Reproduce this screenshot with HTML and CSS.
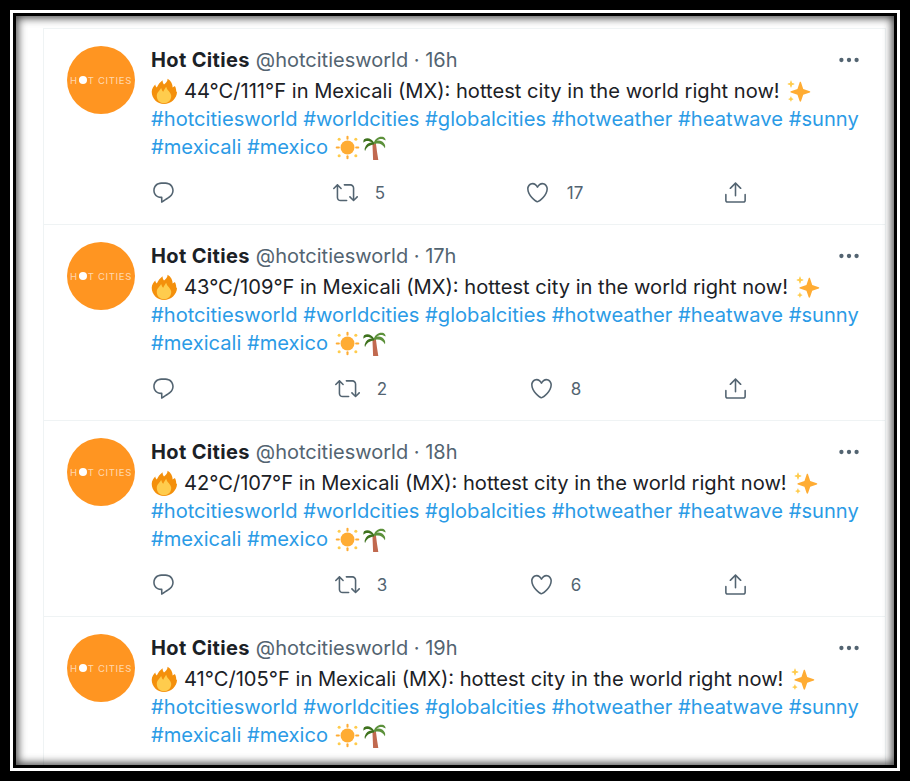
FILE: index.html
```html
<!DOCTYPE html>
<html lang="en">
<head>
  <meta charset="UTF-8">
  <title>Hot Cities</title>
  <link rel="stylesheet" href="styles.css">
</head>
<body>

<!-- shared icons -->
<svg class="defs" width="0" height="0">
  <symbol id="i-reply" viewBox="0 0 24 24"><path d="M14.046 2.242l-4.148-.01h-.002c-4.374 0-7.8 3.427-7.8 7.802 0 4.098 3.186 7.206 7.465 7.37v3.828c0 .108.044.286.12.403.142.225.384.347.632.347.138 0 .277-.038.402-.118.264-.168 6.473-4.14 8.088-5.506 1.902-1.61 3.04-3.97 3.043-6.312v-.017c-.006-4.367-3.43-7.787-7.8-7.788zm3.787 12.972c-1.134.96-4.862 3.405-6.772 4.643V16.67c0-.414-.335-.75-.75-.75h-.396c-3.66 0-6.318-2.476-6.318-5.886 0-3.534 2.768-6.302 6.3-6.302l4.147.01h.002c3.532 0 6.3 2.766 6.302 6.296-.003 1.91-.942 3.844-2.514 5.176z"/></symbol>
  <symbol id="i-retweet" viewBox="0 0 24 24"><path d="M23.77 15.67c-.292-.293-.767-.293-1.06 0l-2.22 2.22V7.65c0-2.068-1.683-3.75-3.75-3.75h-5.85c-.414 0-.75.336-.75.75s.336.75.75.75h5.85c1.24 0 2.25 1.01 2.25 2.25v10.24l-2.22-2.22c-.293-.293-.768-.293-1.06 0s-.294.768 0 1.06l3.5 3.5c.145.147.337.22.53.22s.383-.072.53-.22l3.5-3.5c.294-.292.294-.767 0-1.06zm-10.66 3.28H7.26c-1.24 0-2.25-1.01-2.25-2.25V6.46l2.22 2.22c.148.147.34.22.532.22s.384-.073.53-.22c.293-.293.293-.768 0-1.06l-3.5-3.5c-.293-.294-.768-.294-1.06 0l-3.5 3.5c-.294.292-.294.767 0 1.06s.767.293 1.06 0l2.22-2.22V16.7c0 2.068 1.683 3.75 3.75 3.75h5.85c.414 0 .75-.336.75-.75s-.337-.75-.75-.75z"/></symbol>
  <symbol id="i-heart" viewBox="0 0 24 24"><path d="M12 21.638h-.014C9.403 21.59 1.95 14.856 1.95 8.478c0-3.064 2.525-5.754 5.403-5.754 2.29 0 3.83 1.58 4.646 2.73.814-1.148 2.354-2.73 4.645-2.73 2.88 0 5.404 2.69 5.404 5.755 0 6.376-7.454 13.11-10.037 13.157H12zM7.354 4.225c-2.08 0-3.903 1.988-3.903 4.255 0 5.74 7.034 11.596 8.55 11.658 1.518-.062 8.55-5.917 8.55-11.658 0-2.267-1.823-4.255-3.903-4.255-2.528 0-3.94 2.936-3.952 2.965-.23.562-1.156.562-1.387 0-.014-.03-1.425-2.965-3.954-2.965z"/></symbol>
  <symbol id="i-share" viewBox="0 0 24 24"><path d="M17.53 7.47l-5-5c-.293-.293-.768-.293-1.06 0l-5 5c-.294.293-.294.768 0 1.06s.767.294 1.06 0l3.72-3.72V15c0 .414.336.75.75.75s.75-.336.75-.75V4.81l3.72 3.72c.146.147.338.22.53.22s.384-.072.53-.22c.293-.293.293-.767 0-1.06z"/><path d="M19.708 21.944H4.292C3.028 21.944 2 20.916 2 19.652V14c0-.414.336-.75.75-.75s.75.336.75.75v5.652c0 .437.355.792.792.792h15.416c.437 0 .792-.355.792-.792V14c0-.414.336-.75.75-.75s.75.336.75.75v5.652c0 1.264-1.028 2.292-2.292 2.292z"/></symbol>
  <symbol id="i-more" viewBox="0 0 24 24"><circle cx="5" cy="12" r="2"/><circle cx="12" cy="12" r="2"/><circle cx="19" cy="12" r="2"/></symbol>
  <symbol id="e-fire" viewBox="0 0 36 36"><path fill="#f4900c" d="M35 19c0-2.1-.35-4.1-.98-5.99C33 10 32 12 30 13c0-4-2-9-7-12 0 4-3 6-5 8-1.5-2-2-4-2-6-4 3-6 6-8 10-1-1-2-2-2-4-2 2-5 6-5 10 0 9.4 7.6 17 17 17s18-7.6 18-17z"/><path fill="#ffcc4d" d="M28 25c0 6-4.5 10-10 10S8 31 8 25c0-5 4-7 6-11 1 2 1 4 3 5 1-3 3-5 4-7 1 4 3 5 5 8 1 1.500 2 3 2 5z"/></symbol>
  <symbol id="e-spark" viewBox="0 0 36 36"><path fill="#ffac33" d="M34.300 17.500l-9.500-3.200-3.200-9.600c-.3-.9-1.600-.9-1.900 0l-3.200 9.600-9.500 3.200c-.9.300-.9 1.600 0 1.900l9.500 3.200 3.200 9.500c.3.900 1.600.9 1.900 0l3.200-9.500 9.500-3.200c.9-.3.900-1.600 0-1.900z"/><path fill="#ffcc4d" d="M11.700 6.600L8.800 5.600 7.800 2.700c-.2-.5-1-.5-1.200 0l-1 2.900-2.900 1c-.5.200-.5 1 0 1.200l2.900 1 1 2.900c.2.500 1 .5 1.200 0l1-2.900 2.900-1c.5-.2.500-1 0-1.200zM10.300 28.300l-2-.7-.7-2c-.2-.5-.9-.5-1.100 0l-.7 2-2 .7c-.5.200-.5.900 0 1.100l2 .7.7 2c.2.500.9.500 1.100 0l.7-2 2-.7c.5-.2.500-.9 0-1.100z"/></symbol>
  <symbol id="e-sun" viewBox="0 0 36 36"><g fill="#ffac33"><circle cx="18" cy="18" r="10"/><rect x="16.500" y="1" width="3" height="6" rx="1.500"/><rect x="16.500" y="29" width="3" height="6" rx="1.500"/><rect x="1" y="16.500" width="6" height="3" rx="1.500"/><rect x="29" y="16.500" width="6" height="3" rx="1.500"/><circle cx="6" cy="6" r="2.200" fill="#ffcc4d"/><circle cx="30" cy="6" r="2.200" fill="#ffcc4d"/><circle cx="6" cy="30" r="2.200" fill="#ffcc4d"/><circle cx="30" cy="30" r="2.200" fill="#ffcc4d"/></g></symbol>
  <symbol id="e-palm" viewBox="0 0 36 36"><path fill="#c1694f" d="M15 12h5c1 8 2 16 3.500 24h-7.500C15.500 28 15.500 20 15 12z"/><path fill="#3e721d" d="M18 12C14 5 8 3 3 6c-1 1-1 3-1 5 3-3 8-3 13 0-5-1-9 2-11 8-.5 1.500 0 3 .5 4 2-6 7-9 12-9l2-2z"/><path fill="#5c913b" d="M17 11c2-6 8-10 14-8 2 1 3 3 3 5-4-3-9-3-13 0 5-1 10 1 12 6 .5 2 .5 4 0 5-3-5-8-8-14-6l-2-2z"/></symbol>
</svg>

<div class="frame">
  <div class="frame-line">
    <div class="frame-inner">
      <div class="timeline">

        <div class="tweet">
          <div class="avatar">H<b>O</b>T CITIES</div>
          <div class="tweet-body">
            <div class="tweet-head">
              <span class="name">Hot Cities</span>
              <span class="handle">@hotcitiesworld · 16h</span>
              <svg class="more"><use href="#i-more"/></svg>
            </div>
            <div class="tweet-text">
              <svg class="emoji first"><use href="#e-fire"/></svg>44°C/111°F in Mexicali (MX): hottest city in the world right now! <svg class="emoji"><use href="#e-spark"/></svg><br>
              <a>#hotcitiesworld</a> <a>#worldcities</a> <a>#globalcities</a> <a>#hotweather</a> <a>#heatwave</a> <a>#sunny</a><br>
              <a>#mexicali</a> <a>#mexico</a> <svg class="emoji"><use href="#e-sun"/></svg><svg class="emoji"><use href="#e-palm"/></svg>
            </div>
            <div class="actions">
              <div class="action"><svg><use href="#i-reply"/></svg><span class="count"></span></div>
              <div class="action"><svg><use href="#i-retweet"/></svg><span class="count">5</span></div>
              <div class="action"><svg><use href="#i-heart"/></svg><span class="count">17</span></div>
              <div class="action"><svg><use href="#i-share"/></svg></div>
            </div>
          </div>
        </div>

        <div class="tweet">
          <div class="avatar">H<b>O</b>T CITIES</div>
          <div class="tweet-body">
            <div class="tweet-head">
              <span class="name">Hot Cities</span>
              <span class="handle">@hotcitiesworld · 17h</span>
              <svg class="more"><use href="#i-more"/></svg>
            </div>
            <div class="tweet-text">
              <svg class="emoji first"><use href="#e-fire"/></svg>43°C/109°F in Mexicali (MX): hottest city in the world right now! <svg class="emoji"><use href="#e-spark"/></svg><br>
              <a>#hotcitiesworld</a> <a>#worldcities</a> <a>#globalcities</a> <a>#hotweather</a> <a>#heatwave</a> <a>#sunny</a><br>
              <a>#mexicali</a> <a>#mexico</a> <svg class="emoji"><use href="#e-sun"/></svg><svg class="emoji"><use href="#e-palm"/></svg>
            </div>
            <div class="actions">
              <div class="action"><svg><use href="#i-reply"/></svg><span class="count"></span></div>
              <div class="action"><svg><use href="#i-retweet"/></svg><span class="count">2</span></div>
              <div class="action"><svg><use href="#i-heart"/></svg><span class="count">8</span></div>
              <div class="action"><svg><use href="#i-share"/></svg></div>
            </div>
          </div>
        </div>

        <div class="tweet">
          <div class="avatar">H<b>O</b>T CITIES</div>
          <div class="tweet-body">
            <div class="tweet-head">
              <span class="name">Hot Cities</span>
              <span class="handle">@hotcitiesworld · 18h</span>
              <svg class="more"><use href="#i-more"/></svg>
            </div>
            <div class="tweet-text">
              <svg class="emoji first"><use href="#e-fire"/></svg>42°C/107°F in Mexicali (MX): hottest city in the world right now! <svg class="emoji"><use href="#e-spark"/></svg><br>
              <a>#hotcitiesworld</a> <a>#worldcities</a> <a>#globalcities</a> <a>#hotweather</a> <a>#heatwave</a> <a>#sunny</a><br>
              <a>#mexicali</a> <a>#mexico</a> <svg class="emoji"><use href="#e-sun"/></svg><svg class="emoji"><use href="#e-palm"/></svg>
            </div>
            <div class="actions">
              <div class="action"><svg><use href="#i-reply"/></svg><span class="count"></span></div>
              <div class="action"><svg><use href="#i-retweet"/></svg><span class="count">3</span></div>
              <div class="action"><svg><use href="#i-heart"/></svg><span class="count">6</span></div>
              <div class="action"><svg><use href="#i-share"/></svg></div>
            </div>
          </div>
        </div>

        <div class="tweet">
          <div class="avatar">H<b>O</b>T CITIES</div>
          <div class="tweet-body">
            <div class="tweet-head">
              <span class="name">Hot Cities</span>
              <span class="handle">@hotcitiesworld · 19h</span>
              <svg class="more"><use href="#i-more"/></svg>
            </div>
            <div class="tweet-text">
              <svg class="emoji first"><use href="#e-fire"/></svg>41°C/105°F in Mexicali (MX): hottest city in the world right now! <svg class="emoji"><use href="#e-spark"/></svg><br>
              <a>#hotcitiesworld</a> <a>#worldcities</a> <a>#globalcities</a> <a>#hotweather</a> <a>#heatwave</a> <a>#sunny</a><br>
              <a>#mexicali</a> <a>#mexico</a> <svg class="emoji"><use href="#e-sun"/></svg><svg class="emoji"><use href="#e-palm"/></svg>
            </div>
          </div>
        </div>

      </div>
    </div>
  </div>
</div>

</body>
</html>
```

FILE: styles.css
```css
* {
  box-sizing: border-box;
}
html, body {
  margin: 0;
  height: 100%;
}
body {
  font-family: Inter, sans-serif;
  color: #1b2126;
  background: #000;
}
.defs {
  display: block;
}
/* picture frame: black, white, black, then a soft shadow inside */
.frame {
  height: 781px;
  border: 10px solid #000;
}
.frame-line {
  height: 100%;
  border: 3px solid #fff;
}
.frame-inner {
  position: relative;
  height: 100%;
  padding: 12px 8px 0 27px;
  border: 3px solid #000;
  background: #fff;
  overflow: hidden;
}
.frame-inner::after {
  content: "";
  position: absolute;
  top: 0; left: 0;
  width: 100%; height: 100%;
  box-shadow: inset 0 0 8px 2px rgba(0,0,0,0.75);
  pointer-events: none;
}
.timeline {
  border: 1px solid #eff3f4;
  border-bottom: none;
}
.tweet {
  display: flex;
  height: 196px;
  padding: 17px 27px 0 23px;
  border-bottom: 1px solid #eff3f4;
}
.avatar {
  flex: none;
  display: flex;
  align-items: center;
  justify-content: center;
  width: 68px;
  height: 68px;
  margin-right: 16px;
  border-radius: 50%;
  background: #ff9521;
  color: rgba(255,255,255,0.65);
  font-size: 9.5px;
  letter-spacing: 0.7px;
  white-space: pre;
}
.avatar b {
  width: 8px;
  height: 8px;
  margin: 0 1px;
  border-radius: 50%;
  background: #fff;
  color: #fff;
  font-size: 8px;
  line-height: 8px;
  letter-spacing: 0;
  text-align: center;
}
.tweet-body {
  flex: 1;
  min-width: 0;
}
.tweet-head {
  display: flex;
  align-items: center;
  height: 28px;
  font-size: 20px;
}
.name {
  font-weight: 700;
  letter-spacing: 0.35px;
  margin-right: 6px;
}
.handle {
  color: #536471;
}
.more {
  width: 26px;
  height: 26px;
  margin-left: auto;
  margin-right: -4px;
  fill: #536471;
}
.tweet-text {
  margin-top: 3px;
  font-size: 20.14px;
  line-height: 28px;
  white-space: nowrap;
}
.tweet-text a {
  color: #2b9be6;
}
.emoji {
  width: 25px;
  height: 25px;
  margin: 0 1px;
  vertical-align: -6px;
}
.emoji.first {
  width: 26px;
  height: 26px;
  margin: 0 7px 0 0;
}
.actions {
  display: flex;
  justify-content: space-between;
  width: 597px;
  margin-top: 19px;
}
.action {
  display: flex;
  align-items: center;
  color: #536471;
  font-size: 17px;
}
.action svg {
  width: 25px;
  height: 25px;
  fill: #536471;
}
.count {
  padding-left: 17px;
}
```
